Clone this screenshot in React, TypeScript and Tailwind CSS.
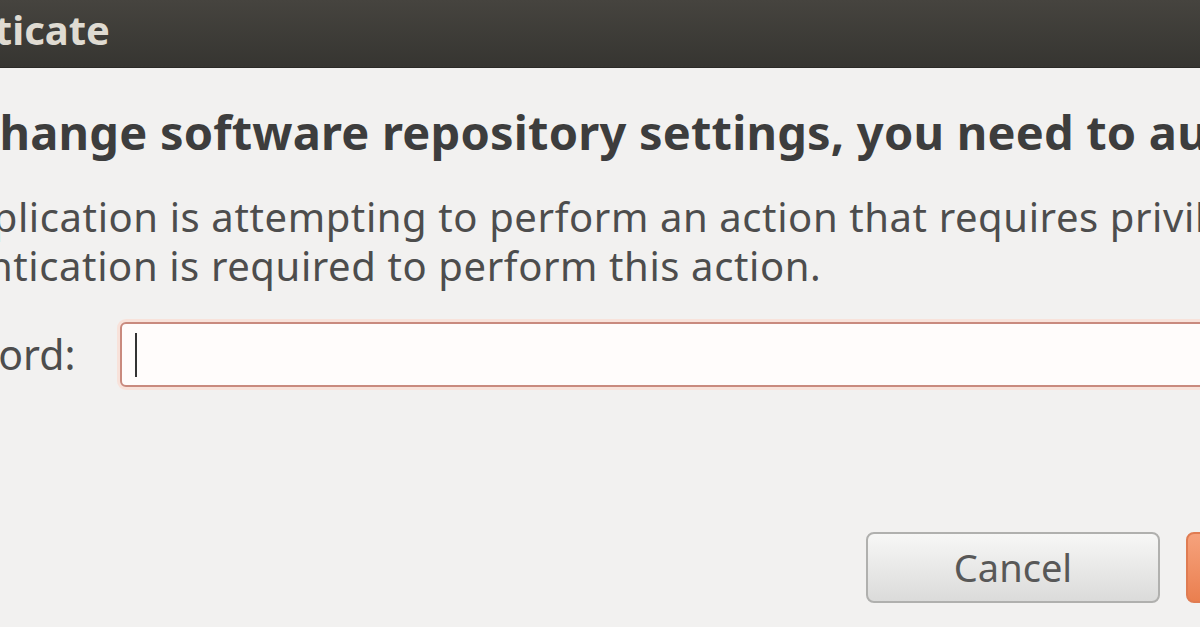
import React from 'react';

export default function App() {
  return (
    <div className="w-[1200px] h-[627px] overflow-hidden bg-[#f2f1f0] flex flex-col font-['Noto_Sans',sans-serif]">
      {/* title bar, cropped on the left */}
      <div className="h-[68px] shrink-0 flex items-center pb-[8px] bg-gradient-to-b from-[#46443f] to-[#363531] border-b border-[#2b2a27]">
        <div className="w-[110px] shrink-0 flex justify-end">
          <span className="whitespace-nowrap text-[40px] font-bold text-[#dfdbd2] leading-none">
            Authenticate
          </span>
        </div>
      </div>

      <div className="ml-[-91px] w-[1600px] flex flex-col">
        <h1 className="mt-[34px] whitespace-nowrap text-[47px] font-bold tracking-[0.2px] text-[#3d3d3d] leading-[60px]">
          To change software repository settings, you need to authenticate.
        </h1>

        <div className="mt-[30px] text-[40px] tracking-[0.6px] text-[#4d4d4d] leading-[49px] whitespace-nowrap">
          <p className="-ml-[27px]">An application is attempting to perform an action that requires privileges.</p>
          <p className="-ml-[36px]">Authentication is required to perform this action.</p>
        </div>

        <div className="mt-[32px] flex items-center">
          <span className="-ml-[30px] w-[241px] shrink-0 text-[41px] text-[#4d4d4d] leading-none whitespace-nowrap">
            Password:
          </span>
          <div className="w-[1300px] h-[65px] rounded-[6px] border-2 border-[#c98a7e] bg-[#fffcfb] shadow-[0_0_0_3px_#f8e2da] flex items-center pl-[13px]">
            <div className="w-[2px] h-[44px] bg-[#333]" />
          </div>
        </div>

        <div className="mt-[145px] pl-[957px] flex gap-[26px]">
          <button className="w-[294px] h-[71px] rounded-[8px] border-2 border-[#b0b0ae] bg-gradient-to-b from-[#f7f7f6] to-[#dbdbda] text-[38px] text-[#585858]">
            Cancel
          </button>
          <button className="w-[294px] h-[71px] rounded-[8px] border-2 border-[#e07c52] bg-gradient-to-b from-[#f6a27c] to-[#ea7f4f] text-[38px] text-white">
            Authenticate
          </button>
        </div>
      </div>
    </div>
  );
}
